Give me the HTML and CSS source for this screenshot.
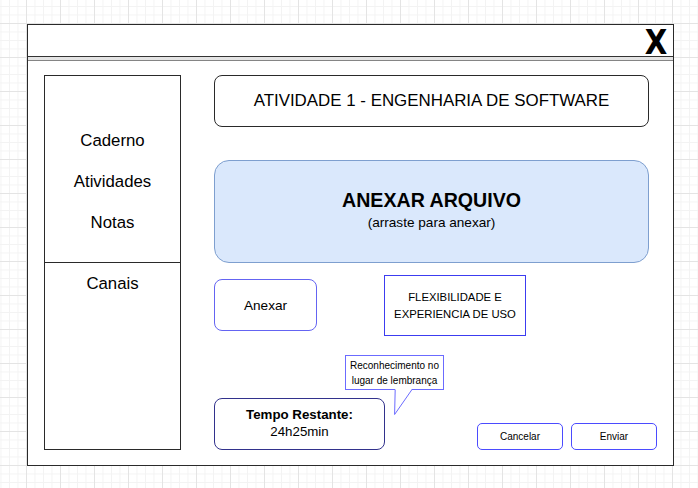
FILE: index.html
```html
<!DOCTYPE html>
<html lang="pt">
<head>
<meta charset="utf-8">
<title>Atividade</title>
<link rel="stylesheet" href="styles.css">
</head>
<body>
<div class="window">
  <div class="titlebar"><span class="close">X</span></div>
  <div class="separator"></div>
  <div class="content">
    <nav class="sidebar">
      <div class="side-top">
        <div class="side-item">Caderno</div>
        <div class="side-item">Atividades</div>
        <div class="side-item">Notas</div>
      </div>
      <div class="side-bottom">
        <div class="side-item">Canais</div>
      </div>
    </nav>
    <main class="main">
      <div class="title-box">ATIVIDADE 1 - ENGENHARIA DE SOFTWARE</div>
      <div class="dropzone">
        <div class="drop-title">ANEXAR ARQUIVO</div>
        <div class="drop-sub">(arraste para anexar)</div>
      </div>
      <div class="row1">
        <div class="btn-anexar">Anexar</div>
        <div class="note">FLEXIBILIDADE E<br>EXPERIENCIA DE USO</div>
      </div>
      <div class="callout">Reconhecimento no<br>lugar de lembrança<svg class="tail" width="20" height="27" viewBox="0 0 20 27"><polygon points="1,0 0.5,25.5 18,0" fill="#fff"/><polyline points="1.2,0.5 0.6,25.5 18,0.5" fill="none" stroke="#6b6bff" stroke-width="1"/></svg></div>
      <div class="bottom-row">
        <div class="timer"><b>Tempo Restante:</b><span>24h25min</span></div>
        <div class="actions">
          <button class="btn">Cancelar</button>
          <button class="btn">Enviar</button>
        </div>
      </div>
    </main>
  </div>
</div>
</body>
</html>
```

FILE: styles.css
```css
* { box-sizing: border-box; }

body {
  margin: 0;
  width: 698px;
  height: 488px;
  overflow: hidden;
  font-family: "Liberation Sans", Arial, sans-serif;
  color: #000;
  background-color: #fff;
  background-image:
    linear-gradient(to right, #e4e4e4 1px, transparent 1px),
    linear-gradient(to bottom, #e4e4e4 1px, transparent 1px),
    linear-gradient(to right, #f3f3f3 1px, transparent 1px),
    linear-gradient(to bottom, #f3f3f3 1px, transparent 1px);
  background-size: 34px 34px, 34px 34px, 8.5px 8.5px, 8.5px 8.5px;
  background-position: 26px 23px, 26px 23px, 26px 23px, 26px 23px;
}

.window {
  margin: 24px 0 0 27px;
  width: 647px;
  height: 442px;
  border: 1px solid #2a2a2a;
  background: #fff;
  display: flex;
  flex-direction: column;
}

.titlebar {
  height: 31px;
  flex: none;
  display: flex;
  justify-content: flex-end;
  align-items: flex-start;
  padding-right: 6px;
}

.close {
  display: block;
  font-family: "DejaVu Sans", sans-serif;
  font-weight: bold;
  font-size: 34px;
  line-height: 34px;
  transform: scaleX(0.86);
  transform-origin: right center;
}

.separator {
  height: 5px;
  flex: none;
  border-top: 1px solid #333;
  border-bottom: 1px solid #858585;
  background: #e4e4e4;
}

.content {
  flex: 1;
  display: flex;
  align-items: flex-start;
  padding: 14px 0 0 16px;
}

.sidebar {
  width: 137px;
  height: 375px;
  border: 1px solid #2a2a2a;
  display: flex;
  flex-direction: column;
  flex: none;
}

.side-top {
  height: 187px;
  border-bottom: 1px solid #2a2a2a;
  padding-top: 44px;
}

.side-item {
  text-align: center;
  font-size: 16.8px;
  line-height: 41px;
}

.side-bottom {
  flex: 1;
}

.main {
  margin-left: 33px;
  width: 443px;
  display: flex;
  flex-direction: column;
  align-items: flex-start;
}

.title-box {
  width: 435px;
  height: 52px;
  border: 1px solid #2a2a2a;
  border-radius: 8px;
  display: flex;
  align-items: center;
  justify-content: center;
  font-size: 16.9px;
}

.dropzone {
  margin-top: 33px;
  width: 435px;
  height: 103px;
  background: #dae8fc;
  border: 1px solid #7e9fcf;
  border-radius: 15px;
  display: flex;
  flex-direction: column;
  align-items: center;
  justify-content: center;
  padding-bottom: 1px;
}

.drop-title {
  font-weight: bold;
  font-size: 19.6px;
  line-height: 23px;
}

.drop-sub {
  font-size: 13.6px;
  line-height: 21px;
}

.row1 {
  margin-top: 12px;
  display: flex;
  align-items: flex-start;
  gap: 67px;
}

.btn-anexar {
  margin-top: 4px;
  width: 103px;
  height: 52px;
  border: 1px solid #6464f2;
  border-radius: 8px;
  display: flex;
  align-items: center;
  justify-content: center;
  font-size: 13.6px;
}

.note {
  width: 142px;
  height: 61px;
  border: 1px solid #3c3cf0;
  display: flex;
  align-items: center;
  justify-content: center;
  text-align: center;
  font-size: 11.3px;
  line-height: 17px;
}

.callout {
  position: relative;
  margin-top: 19px;
  margin-left: 131px;
  width: 99px;
  height: 35px;
  border: 1px solid #6b6bff;
  background: #fff;
  display: flex;
  align-items: center;
  justify-content: center;
  text-align: center;
  font-size: 10px;
  line-height: 14.5px;
  padding-top: 2px;
}

.tail {
  position: absolute;
  left: 48px;
  top: 33px;
  overflow: visible;
}

.bottom-row {
  margin-top: 8px;
  width: 443px;
  display: flex;
  align-items: flex-end;
  justify-content: space-between;
}

.timer {
  width: 171px;
  height: 52px;
  border: 1px solid #32328c;
  border-radius: 8px;
  display: flex;
  flex-direction: column;
  align-items: center;
  justify-content: center;
  font-size: 13.3px;
  line-height: 16.7px;
}

.timer b {
  font-weight: bold;
}

.actions {
  display: flex;
  gap: 8px;
}

.btn {
  width: 86px;
  height: 27px;
  margin: 0;
  padding: 0;
  background: #fff;
  border: 1.5px solid #4b4bff;
  border-radius: 5px;
  font-family: "Liberation Sans", Arial, sans-serif;
  font-size: 10px;
  color: #000;
}
```
